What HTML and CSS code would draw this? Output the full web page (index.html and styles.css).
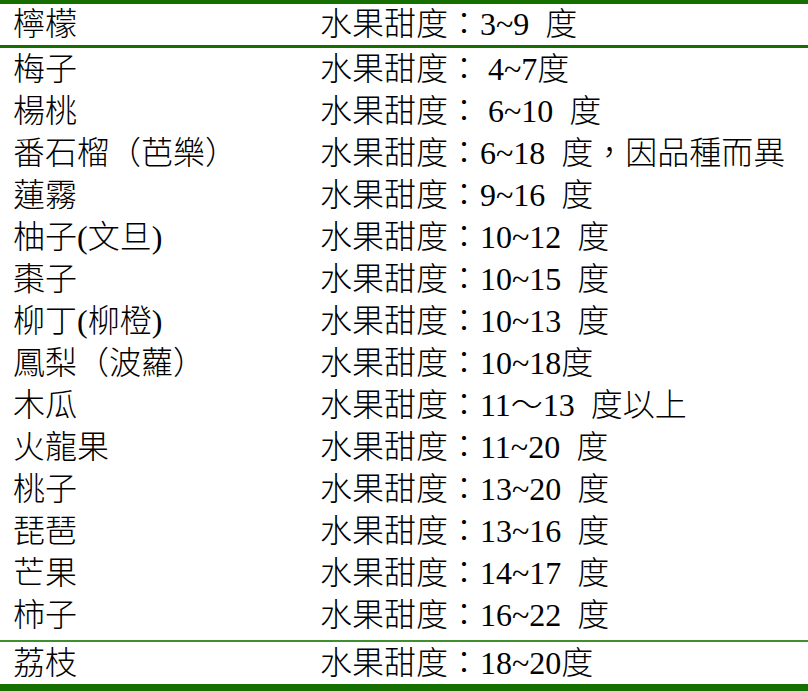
FILE: index.html
```html
<!DOCTYPE html>
<html lang="zh-Hant">
<head>
<meta charset="utf-8">
<title>水果甜度</title>
<link rel="stylesheet" href="styles.css">
</head>
<body>
<div class="sweet-table">
  <div class="row head"><div class="name">檸檬</div><div class="value">水果甜度：3~9&nbsp; 度</div></div>
  <div class="body">
    <div class="row"><div class="name">梅子</div><div class="value">水果甜度：&nbsp;4~7度</div></div>
    <div class="row"><div class="name">楊桃</div><div class="value">水果甜度：&nbsp;6~10&nbsp; 度</div></div>
    <div class="row"><div class="name">番石榴（芭樂）</div><div class="value">水果甜度：6~18&nbsp; 度，因品種而異</div></div>
    <div class="row"><div class="name">蓮霧</div><div class="value">水果甜度：9~16&nbsp; 度</div></div>
    <div class="row"><div class="name">柚子(文旦)</div><div class="value">水果甜度：10~12&nbsp; 度</div></div>
    <div class="row"><div class="name">棗子</div><div class="value">水果甜度：10~15&nbsp; 度</div></div>
    <div class="row"><div class="name">柳丁(柳橙)</div><div class="value">水果甜度：10~13&nbsp; 度</div></div>
    <div class="row"><div class="name">鳳梨（波蘿）</div><div class="value">水果甜度：10~18度</div></div>
    <div class="row"><div class="name">木瓜</div><div class="value">水果甜度：11～13&nbsp; 度以上</div></div>
    <div class="row"><div class="name">火龍果</div><div class="value">水果甜度：11~20&nbsp; 度</div></div>
    <div class="row"><div class="name">桃子</div><div class="value">水果甜度：13~20&nbsp; 度</div></div>
    <div class="row"><div class="name">琵琶</div><div class="value">水果甜度：13~16&nbsp; 度</div></div>
    <div class="row"><div class="name">芒果</div><div class="value">水果甜度：14~17&nbsp; 度</div></div>
    <div class="row"><div class="name">柿子</div><div class="value">水果甜度：16~22&nbsp; 度</div></div>
  </div>
  <div class="row foot"><div class="name">荔枝</div><div class="value">水果甜度：18~20度</div></div>
</div>
</body>
</html>
```

FILE: styles.css
```css
html, body {
  margin: 0;
  padding: 0;
  background: #ffffff;
}

body {
  font-family: "Liberation Serif", "Noto Sans CJK TC", serif;
  font-size: 32px;
  font-weight: 300;
  color: #000000;
}

.sweet-table {
  width: 808px;
  border-top: 4px solid #167000;
  border-bottom: 7px solid #167000;
}

.row {
  display: grid;
  grid-template-columns: 320px 1fr;
  height: 42px;
  line-height: 42px;
  white-space: nowrap;
}

.row.head {
  height: 41px;
  line-height: 41px;
  border-bottom: 3px solid #167000;
}

.body {
  padding-bottom: 4px;
  border-bottom: 2px solid #3f8f2c;
}

.name {
  padding-left: 13px;
}
```
